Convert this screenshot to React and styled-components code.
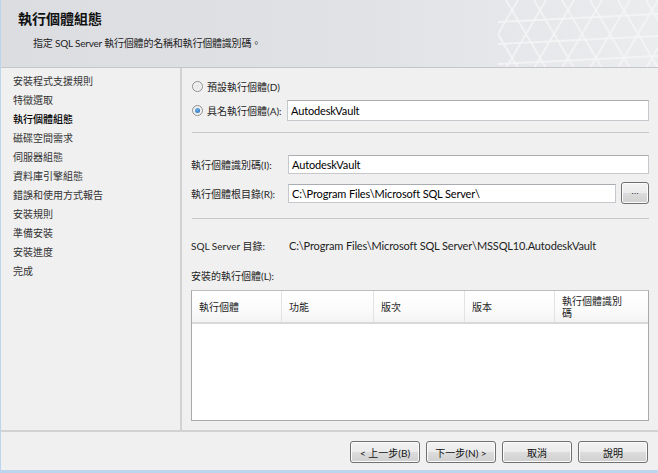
import React from 'react';
import styled, { createGlobalStyle } from 'styled-components';

// -------------------STYLES------------------- //

const GlobalStyle = createGlobalStyle`
  html, body {
    margin: 0;
    padding: 0;
    background: #f0f0f0;
  }
  body {
    font-family: 'Lato', 'Noto Sans CJK TC', sans-serif;
    font-size: 10px;
    color: #1e1e1e;
  }
`;

const Window = styled.div`
  width: 658px;
  height: 473px;
  box-sizing: border-box;
  border-left: 1px solid #bcd4ee;
  border-bottom: 3px solid #bcd4ee;
  background: #f0f0f0;
  display: flex;
  flex-direction: column;
  overflow: hidden;
`;

const Header = styled.div`
  position: relative;
  height: 68px;
  flex-shrink: 0;
  box-sizing: border-box;
  border-bottom: 1px solid #c4c6ca;
  background: linear-gradient(90deg, #dcdde1 0%, #e0e1e5 50%, #ebecee 100%);
  padding: 9px 0 0 17px;
  overflow: hidden;
`;

const Pattern = styled.svg`
  position: absolute;
  right: 0;
  top: 0;
  width: 160px;
  height: 68px;
`;

const Title = styled.h1`
  position: relative;
  margin: 0;
  font-family: 'Noto Sans CJK TC', sans-serif;
  font-size: 14px;
  font-weight: bold;
  line-height: 19px;
  color: #111;
`;

const Subtitle = styled.div`
  position: relative;
  margin: 8px 0 0 15px;
  font-size: 10px;
  line-height: 15px;
  letter-spacing: -0.2px;
  color: #222;
`;

const Main = styled.div`
  display: flex;
  height: 362px;
  flex-shrink: 0;
  border-bottom: 2px solid #d2d2d2;
`;

const Nav = styled.ul`
  list-style: none;
  margin: 0;
  padding: 4px 0 0 12px;
  width: 181px;
  box-sizing: border-box;
  border-right: 2px solid #d2d2d2;
`;

const NavItem = styled.li`
  height: 19px;
  line-height: 19px;
  font-size: 10px;
  color: ${(p) => (p.$active ? '#000' : '#333')};
  font-weight: ${(p) => (p.$active ? 500 : 400)};
  white-space: nowrap;
`;

const Content = styled.div`
  flex: 1;
  padding: 9px 9px 0 9px;
  display: flex;
  flex-direction: column;
`;

const Row = styled.div`
  display: flex;
  align-items: center;
  height: ${(p) => p.$h || 21}px;
  margin-top: ${(p) => p.$mt || 0}px;
`;

const Radio = styled.span`
  width: 11px;
  height: 11px;
  border-radius: 50%;
  box-sizing: border-box;
  border: 1px solid #8e8f8f;
  background: radial-gradient(circle, #e6e6e6 0%, #f9f9f9 100%);
  margin: 0 4px 0 1px;
  display: flex;
  align-items: center;
  justify-content: center;
  &::after {
    content: '';
    display: ${(p) => (p.$checked ? 'block' : 'none')};
    width: 5px;
    height: 5px;
    border-radius: 50%;
    background: radial-gradient(circle at 40% 35%, #6fb6ee 0%, #1b5fa8 100%);
  }
`;

const Label = styled.span`
  width: ${(p) => (p.$w ? `${p.$w}px` : 'auto')};
  flex-shrink: 0;
  font-size: 10px;
  white-space: nowrap;
`;

const Input = styled.div`
  flex: 1;
  height: ${(p) => p.$h || 21}px;
  box-sizing: border-box;
  background: #fff;
  border: 1px solid #c5c8cd;
  border-top-color: #a9acb1;
  padding-left: 3px;
  display: flex;
  align-items: center;
  font-size: 11px;
  letter-spacing: -0.15px;
  color: #000;
  white-space: nowrap;
`;

const BrowseButton = styled.button`
  width: 28px;
  height: 22px;
  margin-left: 5px;
  border: 1px solid #707070;
  border-radius: 3px;
  background: linear-gradient(#f3f3f3 0%, #ebebeb 50%, #dcdcdc 51%, #d0d0d0 100%);
  box-shadow: inset 0 0 0 1px #fcfcfc;
  font-size: 9px;
  line-height: 9px;
  padding: 0 0 3px;
  color: #222;
`;

const Separator = styled.div`
  height: 1px;
  background: #c8c8c8;
  margin-top: ${(p) => p.$mt}px;
  margin-left: 1px;
`;

const InfoText = styled.span`
  font-size: 11px;
  letter-spacing: -0.15px;
  white-space: nowrap;
`;

const Table = styled.div`
  margin-top: 8px;
  height: 131px;
  box-sizing: border-box;
  border: 1px solid #a9a9a9;
  border-top-color: #bdbdbd;
  background: #fff;
`;

const TableHead = styled.div`
  display: grid;
  grid-template-columns: 90px 92px 91px 90px 1fr;
  height: 31px;
  background: linear-gradient(#ffffff 0%, #fbfbfb 60%, #f3f3f3 100%);
  border-bottom: 2px solid #d9d9d9;
`;

const HeadCell = styled.div`
  display: flex;
  align-items: center;
  padding-left: 7px;
  font-size: 10px;
  line-height: 12px;
  border-right: 1px solid #e3e3e3;
  &:last-child {
    border-right: none;
  }
`;

const Footer = styled.div`
  flex: 1;
  display: flex;
  justify-content: flex-end;
  align-items: flex-start;
  gap: 6px;
  padding: 9px 10px 0 0;
`;

const Button = styled.button`
  width: 70px;
  height: 22px;
  border: 1px solid #707070;
  border-radius: 3px;
  background: linear-gradient(#f2f2f2 0%, #ebebeb 50%, #dddddd 51%, #cfcfcf 100%);
  box-shadow: inset 0 0 0 1px #fbfbfb;
  font-family: 'Lato', 'Noto Sans CJK TC', sans-serif;
  font-size: 10px;
  color: #111;
  padding: 0;
  white-space: nowrap;
`;

// ------------------COMPONENT------------------ //

const steps = [
  '安裝程式支援規則',
  '特徵選取',
  '執行個體組態',
  '磁碟空間需求',
  '伺服器組態',
  '資料庫引擎組態',
  '錯誤和使用方式報告',
  '安裝規則',
  '準備安裝',
  '安裝進度',
  '完成',
];

const columns = ['執行個體', '功能', '版次', '版本'];

const App = () => {
  return (
    <Window>
      <GlobalStyle />
      <Header>
        <Pattern viewBox="0 0 160 68" preserveAspectRatio="none">
          {[0, 1, 2, 3, 4, 5, 6].map((i) => (
            <g key={i} stroke="#f6f6f7" strokeWidth="2" opacity="0.8">
              <line x1={i * 28 - 20} y1="0" x2={i * 28 + 20} y2="68" />
              <line x1={i * 28 + 20} y1="0" x2={i * 28 - 20} y2="68" />
            </g>
          ))}
          <line x1="0" y1="22" x2="160" y2="14" stroke="#f6f6f7" strokeWidth="2" opacity="0.8" />
          <line x1="0" y1="44" x2="160" y2="36" stroke="#f6f6f7" strokeWidth="2" opacity="0.8" />
          <line x1="0" y1="64" x2="160" y2="56" stroke="#f6f6f7" strokeWidth="2" opacity="0.8" />
        </Pattern>
        <Title>執行個體組態</Title>
        <Subtitle>指定 SQL Server 執行個體的名稱和執行個體識別碼。</Subtitle>
      </Header>

      <Main>
        <Nav>
          {steps.map((s, i) => (
            <NavItem key={s} $active={i === 2}>{s}</NavItem>
          ))}
        </Nav>

        <Content>
          <Row $h={18}>
            <Radio />
            <Label>預設執行個體(D)</Label>
          </Row>
          <Row $mt={5}>
            <Radio $checked />
            <Label $w={80}>具名執行個體(A):</Label>
            <Input>AutodeskVault</Input>
          </Row>

          <Separator $mt={11} />

          <Row $mt={22} $h={19}>
            <Label $w={97}>執行個體識別碼(I):</Label>
            <Input $h={19}>AutodeskVault</Input>
          </Row>
          <Row $mt={8} $h={22}>
            <Label $w={97}>執行個體根目錄(R):</Label>
            <Input $h={19}>C:\Program Files\Microsoft SQL Server\</Input>
            <BrowseButton>...</BrowseButton>
          </Row>

          <Separator $mt={14} />

          <Row $mt={19} $h={14}>
            <Label $w={98}>SQL Server 目錄:</Label>
            <InfoText>C:\Program Files\Microsoft SQL Server\MSSQL10.AutodeskVault</InfoText>
          </Row>
          <Row $mt={16} $h={14}>
            <Label>安裝的執行個體(L):</Label>
          </Row>

          <Table>
            <TableHead>
              {columns.map((c) => (
                <HeadCell key={c}>{c}</HeadCell>
              ))}
              <HeadCell>執行個體識別<br />碼</HeadCell>
            </TableHead>
          </Table>
        </Content>
      </Main>

      <Footer>
        <Button>&lt; 上一步(B)</Button>
        <Button>下一步(N) &gt;</Button>
        <Button>取消</Button>
        <Button>說明</Button>
      </Footer>
    </Window>
  );
};

export default App;
